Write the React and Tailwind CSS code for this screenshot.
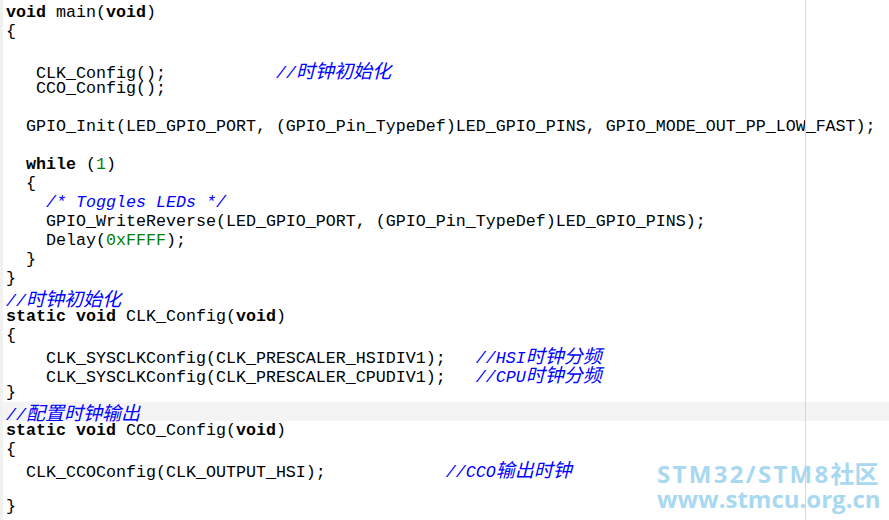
import React from 'react';

// [type, text]: k = keyword, n = number, c = comment, plain otherwise
const LINES = [
  [['k', 'void'], ['', ' main('], ['k', 'void'], ['', ')']],
  [['', '{']],
  [],
  [['', '   CLK_Config();           '], ['c', '//时钟初始化']],
  [['', '   CCO_Config();']],
  [],
  [['', '  GPIO_Init(LED_GPIO_PORT, (GPIO_Pin_TypeDef)LED_GPIO_PINS, GPIO_MODE_OUT_PP_LOW_FAST);']],
  [],
  [['', '  '], ['k', 'while'], ['', ' ('], ['n', '1'], ['', ')']],
  [['', '  {']],
  [['', '    '], ['c', '/* Toggles LEDs */']],
  [['', '    GPIO_WriteReverse(LED_GPIO_PORT, (GPIO_Pin_TypeDef)LED_GPIO_PINS);']],
  [['', '    Delay('], ['n', '0xFFFF'], ['', ');']],
  [['', '  }']],
  [['', '}']],
  [['c', '//时钟初始化']],
  [['k', 'static'], ['', ' '], ['k', 'void'], ['', ' CLK_Config('], ['k', 'void'], ['', ')']],
  [['', '{']],
  [['', '    CLK_SYSCLKConfig(CLK_PRESCALER_HSIDIV1);   '], ['c', '//HSI时钟分频']],
  [['', '    CLK_SYSCLKConfig(CLK_PRESCALER_CPUDIV1);   '], ['c', '//CPU时钟分频']],
  [['', '}']],
  [['c', '//配置时钟输出']],
  [['k', 'static'], ['', ' '], ['k', 'void'], ['', ' CCO_Config('], ['k', 'void'], ['', ')']],
  [['', '{']],
  [['', '  CLK_CCOConfig(CLK_OUTPUT_HSI);            '], ['c', '//CCO输出时钟']],
  [],
  [['', '}']],
];

const HIGHLIGHT = 21;

const Comment = ({ text }) => {
  const parts = text.split(/([\u4e00-\u9fff]+)/).filter(Boolean);
  return (
    <span className="italic text-[#0000ff]">
      {parts.map((p, i) =>
        /[\u4e00-\u9fff]/.test(p) ? (
          <span key={i} className="text-[19px] leading-none [font-family:'Noto_Sans_CJK_SC',sans-serif]">{p}</span>
        ) : (
          <span key={i}>{p}</span>
        )
      )}
    </span>
  );
};

const Token = ({ type, text }) => {
  if (type === 'k') return <span className="font-bold">{text}</span>;
  if (type === 'n') return <span className="text-[#008000]">{text}</span>;
  if (type === 'c') return <Comment text={text} />;
  return <span>{text}</span>;
};

export default function App() {
  return (
    <div className="relative w-[889px] h-[520px] overflow-hidden bg-white flex text-black [font-family:'Liberation_Mono','Noto_Sans_CJK_SC',monospace] text-[16.67px]">
      <div className="w-[3px] bg-[#f1f1f1]" />
      <div className="flex-1 pt-[3px]">
        {LINES.map((segs, i) => (
          <div
            key={i}
            className={`h-[19px] leading-[19px] whitespace-pre pl-[3px] ${i === HIGHLIGHT ? 'bg-[#f4f4f4]' : ''}`}
          >
            {segs.map(([t, s], j) => <Token key={j} type={t} text={s} />)}
          </div>
        ))}
      </div>

      {/* print margin guide */}
      <div className="absolute left-[805px] top-0 bottom-0 w-px bg-[#d6d6d6] pointer-events-none" />

      {/* watermark */}
      <div className="absolute left-[657px] top-[459px] text-[#a9d8f1] font-bold [font-family:'Open_Sans','Noto_Sans_CJK_SC',sans-serif] pointer-events-none">
        <div className="text-[24px] leading-[28px] tracking-[2.3px] whitespace-nowrap">
          STM32/STM8<span className="[font-family:'Noto_Sans_CJK_SC',sans-serif] tracking-normal">社区</span>
        </div>
        <div className="text-[24px] leading-[22px] whitespace-nowrap">www.stmcu.org.cn</div>
      </div>
    </div>
  );
}
